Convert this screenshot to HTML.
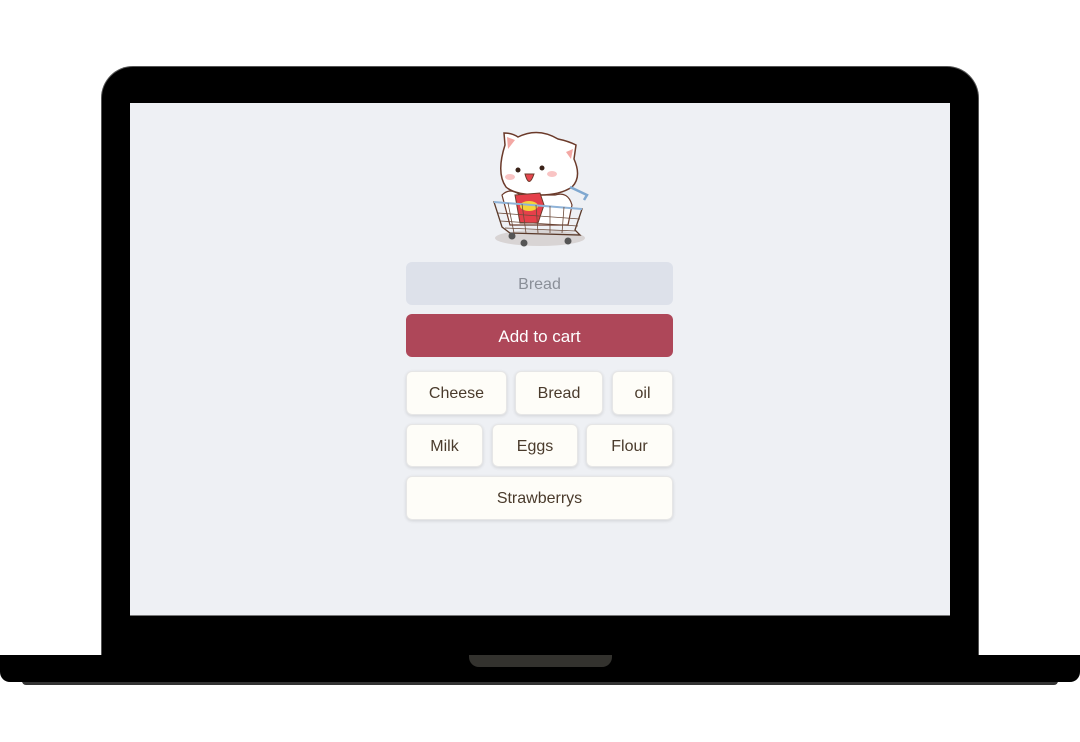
<!DOCTYPE html>
<html><head><meta charset="utf-8"><style>
*{margin:0;padding:0;box-sizing:border-box}
body{width:1080px;height:742px;background:#fff;position:relative;overflow:hidden;font-family:"Liberation Sans",sans-serif}
.frame{position:absolute;left:101px;top:66px;width:878px;height:600px;background:#000;border-radius:32px 32px 0 0;border:1.5px solid #555;border-bottom:none}
.screen{position:absolute;left:130px;top:103px;width:820px;height:513px;background:#eef0f4;border-bottom:1px solid #777}
.base{position:absolute;left:0;top:655px;width:1080px;height:27px;background:#000;border-radius:0 0 10px 10px}
.shadow{position:absolute;left:22px;top:680px;width:1036px;height:5px;background:#333;border-radius:0 0 4px 4px}
.notch{position:absolute;left:469px;top:655px;width:143px;height:12px;background:#33322e;border-radius:0 0 10px 10px}
.b{position:absolute;display:flex;align-items:center;justify-content:center;font-size:16px;border-radius:6px;padding-top:2px}
.in{left:406px;top:262px;width:267px;height:43px;background:#dde1ea;color:#8a8f98}
.add{left:406px;top:314px;width:267px;height:43px;background:#ae4759;color:#fff;font-size:17px}
.c{background:#fefdf8;color:#4a3b2c;border:1px solid #e6e6e6;box-shadow:0 1px 3px rgba(0,0,0,.12)}
</style></head><body>
<div class="frame"></div>
<div class="screen"></div>
<div class="shadow"></div>
<div class="base"></div>
<div class="notch"></div>
<svg style="position:absolute;left:480px;top:125px" width="120" height="130" viewBox="0 0 120 130">
<ellipse cx="60" cy="113" rx="45" ry="8" fill="#d8d4d4"/>
<path d="M22 70 Q30 62 40 70 L75 70 Q88 66 92 80 L88 100 L30 100Z" fill="#fff" stroke="#6b3a2a" stroke-width="1.2"/>
<path d="M25 20 L24 8 Q32 8 38 12 Q58 2 78 14 Q88 16 96 20 L94 34 Q102 52 92 62 Q80 70 60 70 Q35 70 26 62 Q16 48 25 20Z" fill="#fff" stroke="#6b3a2a" stroke-width="1.5"/>
<path d="M27 12 L35 15 L28 24Z" fill="#f3a8a4"/><path d="M93 24 L86 27 L91 34Z" fill="#f3a8a4"/>
<ellipse cx="30" cy="52" rx="5" ry="3" fill="#f9c4c4"/><ellipse cx="72" cy="49" rx="5" ry="3" fill="#f9c4c4"/>
<circle cx="38" cy="45" r="2.5" fill="#3a2218"/><circle cx="62" cy="43" r="2.5" fill="#3a2218"/>
<path d="M45 49 Q49 64 54 49Z" fill="#e5464e" stroke="#6b3a2a" stroke-width="1"/>
<path d="M35 70 L60 68 L64 80 L58 98 L40 98Z" fill="#e5404a" stroke="#6b3a2a" stroke-width="1"/>
<ellipse cx="49" cy="81" rx="9" ry="5" fill="#f5d43a"/>
<path d="M14 77 L102 84 L95 105 L100 110 L30 108 L22 102Z" fill="none" stroke="#5a3a2a" stroke-width="1.3"/>
<path d="M14 77 L102 84" stroke="#8fb3d8" stroke-width="2"/>
<path d="M90 62 L107 70 L104 75" fill="none" stroke="#7fa8d0" stroke-width="2.5"/>
<g stroke="#6b4a3a" stroke-width=".8"><path d="M18 88 L100 94 M20 96 L98 101 M25 103 L96 106"/><path d="M28 78 L34 108 M42 79 L46 108 M56 80 L58 108 M70 81 L70 108 M84 82 L82 108"/></g>
<circle cx="32" cy="111" r="3.5" fill="#555"/><circle cx="44" cy="118" r="3.5" fill="#555"/><circle cx="88" cy="116" r="3.5" fill="#555"/>
</svg>
<div class="b in">Bread</div>
<div class="b add">Add to cart</div>
<div class="b c" style="left:406px;top:371px;width:101px;height:44px">Cheese</div>
<div class="b c" style="left:515px;top:371px;width:88px;height:44px">Bread</div>
<div class="b c" style="left:612px;top:371px;width:61px;height:44px">oil</div>
<div class="b c" style="left:406px;top:424px;width:77px;height:43px">Milk</div>
<div class="b c" style="left:492px;top:424px;width:86px;height:43px">Eggs</div>
<div class="b c" style="left:586px;top:424px;width:87px;height:43px">Flour</div>
<div class="b c" style="left:406px;top:476px;width:267px;height:44px">Strawberrys</div>
</body></html>
